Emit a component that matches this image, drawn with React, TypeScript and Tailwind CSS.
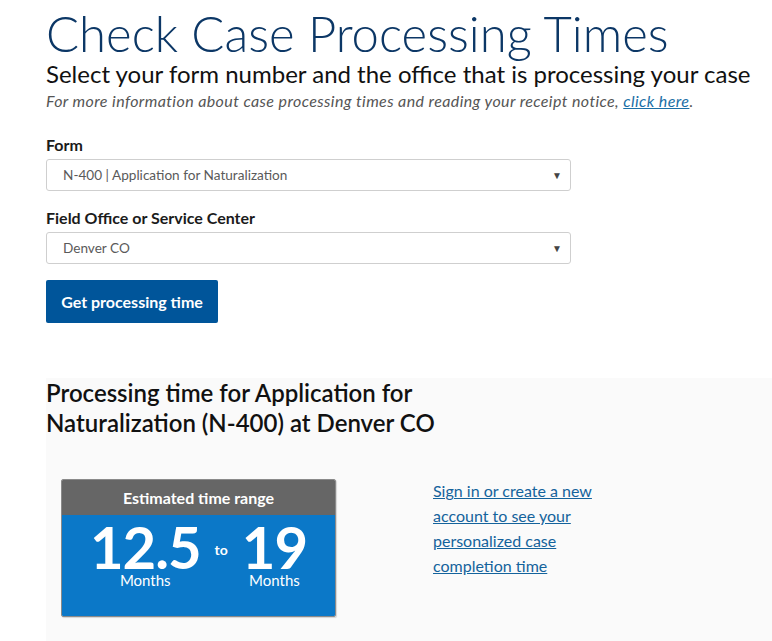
export default function App() {
  return (
    <div className="w-[772px] h-[641px] overflow-hidden bg-white font-['Lato',sans-serif] text-[#1b1b1b]">
      <div className="pl-[46px] pt-[9px]">
        <h1 className="text-[49px] font-light leading-[49px] text-[#0c3766]">
          Check Case Processing Times
        </h1>
        <h2 className="mt-[1px] text-[24px] leading-[30px] text-[#111]">
          Select your form number and the office that is processing your case
        </h2>
        <p className="mt-[1px] text-[16px] italic leading-[22px] tracking-[0.4px] text-[#555]">
          For more information about case processing times and reading your receipt notice,{" "}
          <a href="#" className="text-[#1a6fa6] underline">click here</a>.
        </p>

        <div className="mt-[22px] w-[525px]">
          <label className="block text-[16px] font-bold leading-[22px]">Form</label>
          <div className="mt-[3px] flex h-[32px] items-center justify-between rounded-[3px] border border-[#cfcfcf] bg-white pl-[16px] pr-[8px] text-[13.6px] text-[#5a5a5a]">
            <span>N-400 | Application for Naturalization</span>
            <span className="text-[10px] text-[#444]">▼</span>
          </div>

          <label className="mt-[16px] block text-[16px] font-bold leading-[22px]">
            Field Office or Service Center
          </label>
          <div className="mt-[3px] flex h-[32px] items-center justify-between rounded-[3px] border border-[#cfcfcf] bg-white pl-[16px] pr-[8px] text-[13.6px] text-[#5a5a5a]">
            <span>Denver CO</span>
            <span className="text-[10px] text-[#444]">▼</span>
          </div>

          <button className="mt-[16px] h-[43px] w-[172px] rounded-[2px] bg-[#00559a] text-[16px] font-bold text-white">
            Get processing time
          </button>
        </div>
      </div>

      <div className="ml-[46px] mt-[55px] h-[300px] bg-[#fafafa]">
        <h3 className="w-[440px] text-[24px] font-semibold leading-[30px] text-[#111]">
          Processing time for Application for Naturalization (N-400) at Denver CO
        </h3>
        <div className="mt-[41px] flex items-start">
          <div className="ml-[15px] w-[275px] overflow-hidden rounded-[2px] border border-[#8a8a8a] shadow-[1px_1px_1px_rgba(0,0,0,0.15)]">
            <div className="flex h-[35px] items-center justify-center bg-[#666666] text-[16px] font-bold text-white">
              Estimated time range
            </div>
            <div className="flex h-[101px] items-start justify-center gap-[14px] bg-[#0b78c8] pt-[8px] text-white">
              <div className="flex flex-col items-center">
                <span className="text-[58px] font-bold leading-[48px] tracking-[-1px]">12.5</span>
                <span className="text-[15px] leading-[18px]">Months</span>
              </div>
              <span className="mt-[16px] text-[14px] font-bold">to</span>
              <div className="flex flex-col items-center">
                <span className="text-[58px] font-bold leading-[48px] tracking-[-1px]">19</span>
                <span className="text-[15px] leading-[18px]">Months</span>
              </div>
            </div>
          </div>
          <a href="#" className="ml-[97px] -mt-[1px] w-[172px] text-[16px] leading-[25px] text-[#14639c] underline">
            Sign in or create a new account to see your personalized case completion time
          </a>
        </div>
      </div>
    </div>
  );
}
